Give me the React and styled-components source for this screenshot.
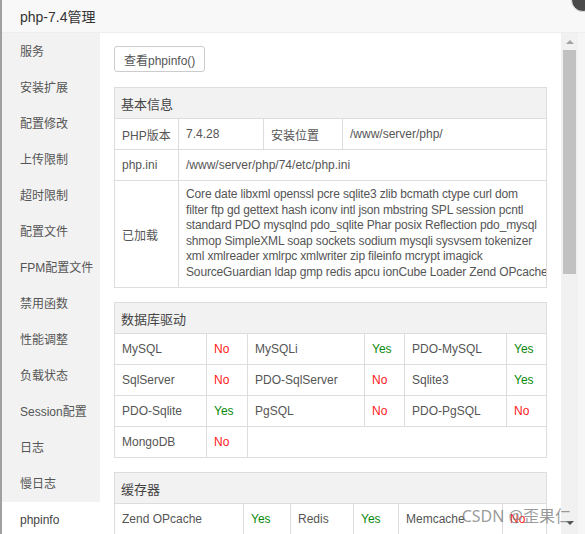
import React from 'react';
import styled, { createGlobalStyle } from 'styled-components';

const GlobalStyle = createGlobalStyle`
  html, body {
    margin: 0;
    padding: 0;
    background: #fff;
  }
  body {
    font-family: "Liberation Sans", "Noto Sans CJK SC", sans-serif;
    font-size: 12px;
    color: #555;
  }
`;

const menu = [
  '服务', '安装扩展', '配置修改', '上传限制', '超时限制', '配置文件',
  'FPM配置文件', '禁用函数', '性能调整', '负载状态', 'Session配置', '日志', '慢日志', 'phpinfo',
];

const loaded = [
  'Core date libxml openssl pcre sqlite3 zlib bcmath ctype curl dom',
  'filter ftp gd gettext hash iconv intl json mbstring SPL session pcntl',
  'standard PDO mysqlnd pdo_sqlite Phar posix Reflection pdo_mysql',
  'shmop SimpleXML soap sockets sodium mysqli sysvsem tokenizer',
  'xml xmlreader xmlrpc xmlwriter zip fileinfo mcrypt imagick',
  'SourceGuardian ldap gmp redis apcu ionCube Loader Zend OPcache',
];

const dbRows = [
  [['MySQL', false], ['MySQLi', true], ['PDO-MySQL', true]],
  [['SqlServer', false], ['PDO-SqlServer', false], ['Sqlite3', true]],
  [['PDO-Sqlite', true], ['PgSQL', false], ['PDO-PgSQL', false]],
];

const cacheRow = [['Zend OPcache', true], ['Redis', true], ['Memcache', false]];

const Status = ({ ok }) => <Flag $ok={ok}>{ok ? 'Yes' : 'No'}</Flag>;

const App = () => {
  return (
    <>
      <GlobalStyle />
      <Window>
        <TitleBar>php-7.4管理</TitleBar>
        <Body>
          <Sidebar>
            {menu.map((m) => (
              <MenuItem key={m} $active={m === 'phpinfo'}>{m}</MenuItem>
            ))}
          </Sidebar>
          <Main>
            <Button>查看phpinfo()</Button>

            <Table>
              <colgroup>
                <col style={{ width: 64 }} />
                <col style={{ width: 85 }} />
                <col style={{ width: 79 }} />
                <col />
              </colgroup>
              <tbody>
                <tr><Head colSpan={4}>基本信息</Head></tr>
                <tr>
                  <Cell>PHP版本</Cell>
                  <Cell>7.4.28</Cell>
                  <Cell>安装位置</Cell>
                  <Cell>/www/server/php/</Cell>
                </tr>
                <tr>
                  <Cell>php.ini</Cell>
                  <Cell colSpan={3}>/www/server/php/74/etc/php.ini</Cell>
                </tr>
                <tr>
                  <Cell>已加载</Cell>
                  <TextCell colSpan={3}>
                    {loaded.map((line) => (
                      <Line key={line}>{line}</Line>
                    ))}
                  </TextCell>
                </tr>
              </tbody>
            </Table>

            <Table>
              <colgroup>
                <col style={{ width: 92 }} />
                <col style={{ width: 41 }} />
                <col style={{ width: 117 }} />
                <col style={{ width: 40 }} />
                <col style={{ width: 102 }} />
                <col />
              </colgroup>
              <tbody>
                <tr><Head colSpan={6}>数据库驱动</Head></tr>
                {dbRows.map((row, i) => (
                  <tr key={i}>
                    {row.map(([name, ok]) => (
                      <React.Fragment key={name}>
                        <Cell>{name}</Cell>
                        <Cell><Status ok={ok} /></Cell>
                      </React.Fragment>
                    ))}
                  </tr>
                ))}
                <tr>
                  <Cell>MongoDB</Cell>
                  <Cell><Status ok={false} /></Cell>
                  <Cell colSpan={4} />
                </tr>
              </tbody>
            </Table>

            <Table>
              <colgroup>
                <col style={{ width: 129 }} />
                <col style={{ width: 47 }} />
                <col style={{ width: 63 }} />
                <col style={{ width: 45 }} />
                <col style={{ width: 104 }} />
                <col />
              </colgroup>
              <tbody>
                <tr><Head colSpan={6}>缓存器</Head></tr>
                <tr>
                  {cacheRow.map(([name, ok]) => (
                    <React.Fragment key={name}>
                      <Cell>{name}</Cell>
                      <Cell><Status ok={ok} /></Cell>
                    </React.Fragment>
                  ))}
                </tr>
              </tbody>
            </Table>
          </Main>
          <ScrollTrack>
            <ArrowUp />
            <Thumb />
            <ArrowDown />
          </ScrollTrack>
          <Edge />
        </Body>
        <CloseDot />
        <Watermark>CSDN @歪果仁</Watermark>
      </Window>
    </>
  );
};

export default App;

// Styled Components

const Window = styled.div`
  position: relative;
  width: 585px;
  height: 534px;
  display: flex;
  flex-direction: column;
  overflow: hidden;
  border-left: 2px solid #a0a0a0;
  box-sizing: border-box;
  background: #fff;
`;

const TitleBar = styled.div`
  height: 33px;
  flex: none;
  box-sizing: border-box;
  border-bottom: 1px solid #eee;
  background: #f8f8f8;
  padding-left: 18px;
  display: flex;
  align-items: center;
  font-size: 14px;
  color: #333;
`;

const CloseDot = styled.div`
  position: absolute;
  right: -10px;
  top: -12px;
  width: 22px;
  height: 22px;
  border-radius: 50%;
  background: #4a4a4a;
  border: 1px solid #ddd;
`;

const Body = styled.div`
  flex: 1;
  display: flex;
  min-height: 0;
`;

const Sidebar = styled.div`
  width: 98px;
  flex: none;
  background: #f2f2f2;
  padding-top: 1px;
`;

const MenuItem = styled.div`
  height: 36px;
  line-height: 36px;
  padding-left: 18px;
  font-size: 12px;
  color: ${(p) => (p.$active ? '#444' : '#555')};
  background: ${(p) => (p.$active ? '#fff' : 'transparent')};
  white-space: nowrap;
`;

const Main = styled.div`
  flex: 1;
  padding: 13px 14px 0;
  overflow: hidden;
  display: flex;
  flex-direction: column;
  align-items: flex-start;
`;

const Button = styled.button`
  height: 26px;
  padding: 0 9px;
  border: 1px solid #ccc;
  border-radius: 3px;
  background: #fff;
  font-family: inherit;
  font-size: 12px;
  color: #555;
  margin-bottom: 15px;
  flex: none;
`;

const Table = styled.table`
  width: 433px;
  flex: none;
  table-layout: fixed;
  border-collapse: collapse;
  margin-bottom: 14px;
  font-size: 12px;
  color: #555;
`;

const Head = styled.td`
  box-sizing: border-box;
  height: 31px;
  padding: 0 6px;
  background: #f2f2f2;
  border: 1px solid #ddd;
  font-size: 13px;
  color: #444;
`;

const Cell = styled.td`
  box-sizing: border-box;
  height: 31px;
  padding: 0 7px;
  border: 1px solid #ddd;
  white-space: nowrap;
  overflow: hidden;
`;

const TextCell = styled(Cell)`
  height: auto;
  padding: 6px 7px 7px;
`;

const Line = styled.div`
  height: 15.5px;
  line-height: 15.5px;
  white-space: nowrap;
  letter-spacing: -0.15px;
`;

const Flag = styled.span`
  color: ${(p) => (p.$ok ? '#0a8a0a' : '#ff1a1a')};
`;

const ScrollTrack = styled.div`
  width: 17px;
  flex: none;
  background: #f1f1f1;
  display: flex;
  flex-direction: column;
  align-items: center;
`;

const ArrowUp = styled.div`
  margin-top: 7px;
  width: 0;
  height: 0;
  border-left: 4px solid transparent;
  border-right: 4px solid transparent;
  border-bottom: 4px solid #a3a3a3;
`;

const Thumb = styled.div`
  margin-top: 6px;
  width: 13px;
  height: 224px;
  background: #c1c1c1;
`;

const ArrowDown = styled.div`
  margin-top: auto;
  margin-bottom: 9px;
  width: 0;
  height: 0;
  border-left: 4px solid transparent;
  border-right: 4px solid transparent;
  border-top: 4px solid #505050;
`;

const Edge = styled.div`
  width: 7px;
  flex: none;
  background: #f6f6f6;
`;

const Watermark = styled.div`
  position: absolute;
  right: 14px;
  bottom: 7px;
  font-size: 16px;
  color: rgba(120, 120, 120, 0.75);
  font-family: "Noto Sans", "Noto Sans CJK SC", sans-serif;
  pointer-events: none;
`;
